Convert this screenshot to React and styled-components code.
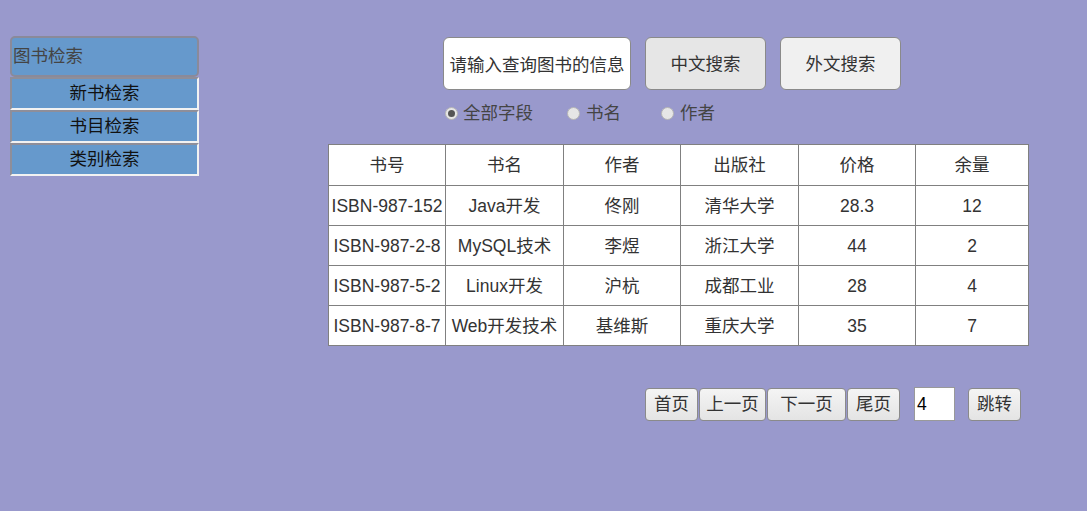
import React from "react";
import styled, { createGlobalStyle } from "styled-components";

const FONT = `"Liberation Sans", "Noto Sans CJK SC", sans-serif`;

const Global = createGlobalStyle`
  html, body { margin: 0; padding: 0; background: #9999cc; }
  body { font-family: ${FONT}; font-size: 17.5px; }
  #root { min-height: 511px; }
`;

const Page = styled.div`
  display: flex;
  align-items: flex-start;
  padding: 36px 0 0 10px;
  min-height: 475px;
  background: #9999cc;
`;

const Sidebar = styled.div`
  width: 189px;
  display: flex;
  flex-direction: column;
`;

const SideHeader = styled.div`
  height: 41px;
  box-sizing: border-box;
  background: #6699cc;
  border: 2px solid #8a8a9a;
  border-radius: 5px;
  color: #444;
  font-size: 17.5px;
  line-height: 36px;
  padding-left: 1px;
`;

const SideItem = styled.div`
  height: 33px;
  box-sizing: border-box;
  background: #6699cc;
  border-style: solid;
  border-width: 2px;
  border-color: #8e8e9a #f2f2f2 #f2f2f2 #8e8e9a;
  text-align: center;
  color: #111;
  font-size: 17.5px;
  line-height: 29px;
`;

const Main = styled.div`
  margin-left: 129px;
  width: 700px;
  display: flex;
  flex-direction: column;
`;

const SearchRow = styled.div`
  display: flex;
  gap: 14px;
  padding-left: 115px;
  margin-top: 1px;
`;

const SearchBox = styled.div`
  width: 188px;
  height: 53px;
  box-sizing: border-box;
  background: #fff;
  border: 1px solid #8a8a8a;
  border-radius: 6px;
  color: #333;
  display: flex;
  align-items: center;
  justify-content: center;
  font-size: 17.5px;
  white-space: nowrap;
`;

const SearchButton = styled.button`
  width: 121px;
  height: 53px;
  box-sizing: border-box;
  background: ${(p) => p.$bg};
  border: 1px solid #8a8a8a;
  border-radius: 6px;
  color: #333;
  font-family: ${FONT};
  font-size: 17.5px;
  line-height: 20px;
  padding: 0;
`;

const RadioRow = styled.div`
  display: flex;
  align-items: center;
  padding-left: 117px;
  height: 26px;
  margin-top: 10px;
`;

const RadioLabel = styled.label`
  display: flex;
  align-items: center;
  color: #444;
  font-size: 17.5px;
  line-height: 20px;
  width: ${(p) => p.$w}px;
  gap: ${(p) => p.$gap}px;
  white-space: nowrap;
`;

const Dot = styled.span`
  flex: none;
  width: 13px;
  height: 13px;
  box-sizing: border-box;
  border-radius: 50%;
  border: 1px solid #b5b5b5;
  background: #e6e6e6;
  display: flex;
  align-items: center;
  justify-content: center;
  &::after {
    content: "";
    width: 7px;
    height: 7px;
    border-radius: 50%;
    background: ${(p) => (p.$on ? "#555" : "transparent")};
  }
`;

const Table = styled.table`
  margin-top: 18px;
  border-collapse: collapse;
  background: #fff;
  width: 700px;
  table-layout: fixed;
`;

const Cell = styled.td`
  border: 1px solid #808080;
  text-align: center;
  color: #333;
  font-size: 17.5px;
  line-height: 20px;
  height: ${(p) => (p.$head ? 40 : 39)}px;
  padding: 0;
  white-space: nowrap;
  overflow: hidden;
`;

const Pager = styled.div`
  display: flex;
  justify-content: flex-end;
  align-items: center;
  padding-right: 7px;
  margin-top: 41px;
`;

const PageBtn = styled.button`
  height: 33px;
  width: ${(p) => p.$w}px;
  box-sizing: border-box;
  margin-left: ${(p) => p.$ml}px;
  background: linear-gradient(#f4f4f4, #e4e4e4);
  border: 1px solid #8a8a8a;
  border-radius: 4px;
  color: #333;
  font-family: ${FONT};
  font-size: 17.5px;
  line-height: 20px;
  padding: 0;
  white-space: nowrap;
`;

const PageInput = styled.div`
  width: 41px;
  height: 34px;
  box-sizing: border-box;
  margin-left: 14px;
  background: #fff;
  border: 1px solid #999;
  color: #000;
  font-size: 17.5px;
  line-height: 32px;
  padding-left: 2px;
`;

const headers = ["书号", "书名", "作者", "出版社", "价格", "余量"];
const widths = [117, 118, 117, 118, 117, 113];
const rows = [
  ["ISBN-987-152", "Java开发", "佟刚", "清华大学", "28.3", "12"],
  ["ISBN-987-2-8", "MySQL技术", "李煜", "浙江大学", "44", "2"],
  ["ISBN-987-5-2", "Linux开发", "沪杭", "成都工业", "28", "4"],
  ["ISBN-987-8-7", "Web开发技术", "基维斯", "重庆大学", "35", "7"],
];

export default function App() {
  return (
    <>
      <Global />
      <Page>
        <Sidebar>
          <SideHeader>图书检索</SideHeader>
          <SideItem>新书检索</SideItem>
          <SideItem>书目检索</SideItem>
          <SideItem>类别检索</SideItem>
        </Sidebar>
        <Main>
          <SearchRow>
            <SearchBox>请输入查询图书的信息</SearchBox>
            <SearchButton $bg="#e6e6e6">中文搜索</SearchButton>
            <SearchButton $bg="#f0f0f0">外文搜索</SearchButton>
          </SearchRow>
          <RadioRow>
            <RadioLabel $w={122} $gap={5}>
              <Dot $on />
              全部字段
            </RadioLabel>
            <RadioLabel $w={94} $gap={6}>
              <Dot />
              书名
            </RadioLabel>
            <RadioLabel $w={80} $gap={6}>
              <Dot />
              作者
            </RadioLabel>
          </RadioRow>
          <Table>
            <colgroup>
              {widths.map((w, i) => (
                <col key={i} style={{ width: w }} />
              ))}
            </colgroup>
            <tbody>
              <tr>
                {headers.map((h) => (
                  <Cell key={h} $head>
                    {h}
                  </Cell>
                ))}
              </tr>
              {rows.map((r) => (
                <tr key={r[0]}>
                  {r.map((c, i) => (
                    <Cell key={i}>{c}</Cell>
                  ))}
                </tr>
              ))}
            </tbody>
          </Table>
          <Pager>
            <PageBtn $w={53} $ml={0}>首页</PageBtn>
            <PageBtn $w={67} $ml={1}>上一页</PageBtn>
            <PageBtn $w={79} $ml={1}>下一页</PageBtn>
            <PageBtn $w={53} $ml={1}>尾页</PageBtn>
            <PageInput>4</PageInput>
            <PageBtn $w={53} $ml={13}>跳转</PageBtn>
          </Pager>
        </Main>
      </Page>
    </>
  );
}
